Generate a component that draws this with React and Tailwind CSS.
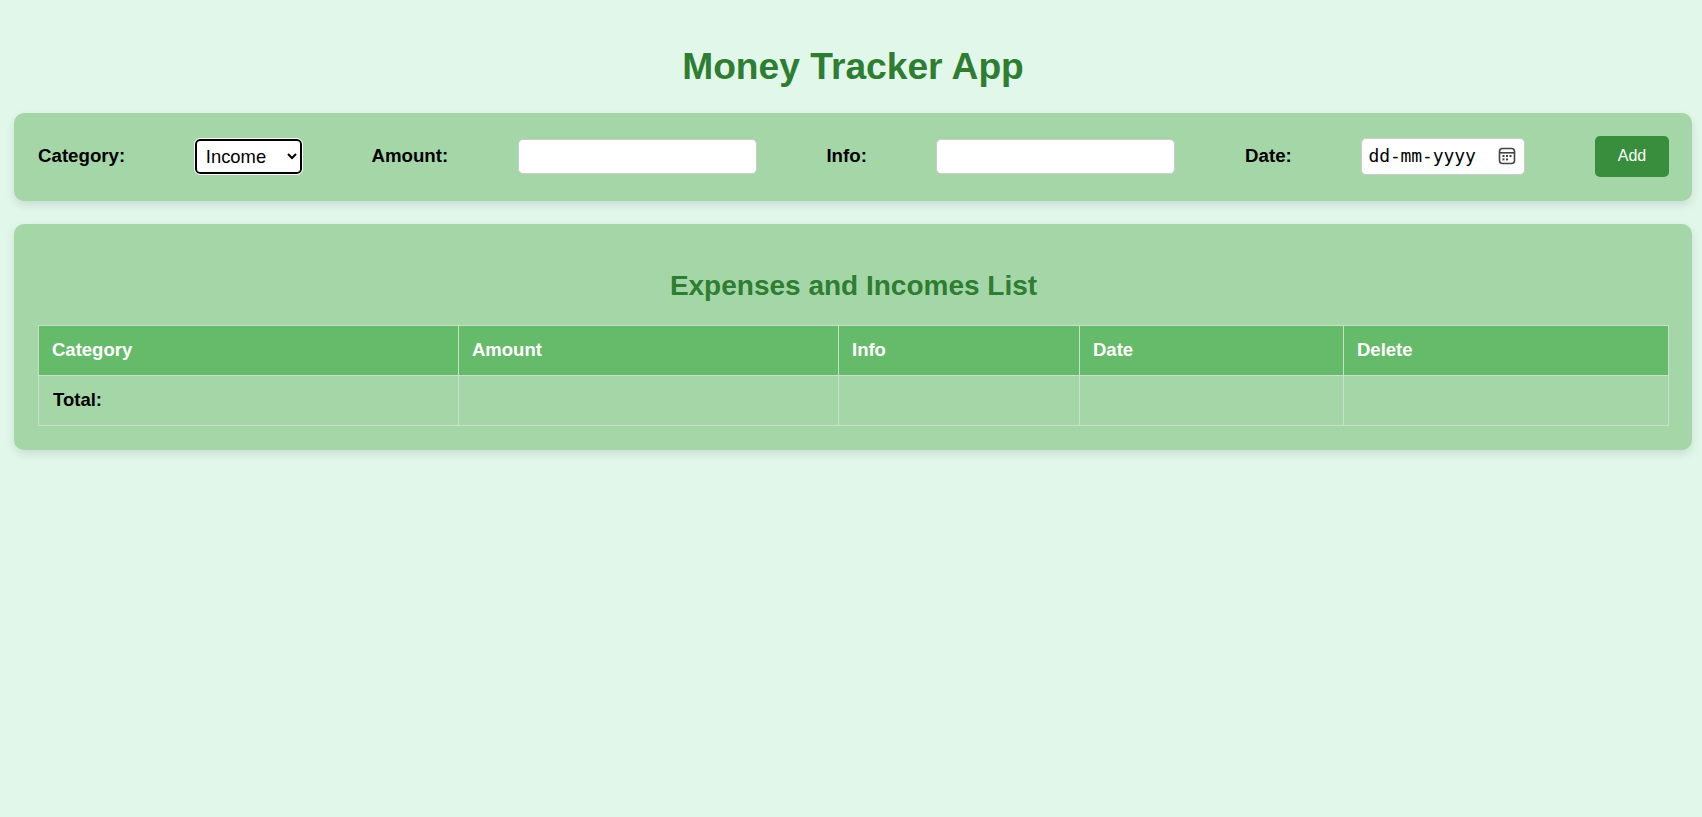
export default function App() {
  const thCls = "border border-[#c8e0c9] px-[13px] pb-[2px] h-[50px] text-left font-bold text-white text-[18.5px] leading-[21px]";
  const tdCls = "border border-[#c8e0c9] px-[14px] pb-[2px] h-[50px]";
  const labelCls = "text-[18.7px] font-bold -translate-y-[1px]";
  return (
    <div className="min-h-[817px] bg-[#e0f7ea] font-['Liberation_Sans',Arial,sans-serif] text-black pl-[14px] pr-[10px] pt-[44px]">
      <h1 className="m-0 text-center text-[37.2px] leading-[44px] font-bold text-[#2e7d32] mb-[25px]">Money Tracker App</h1>
      <form className="flex items-center justify-between h-[88px] pl-[24px] pr-[23px] rounded-[10px] bg-[#a5d6a7] shadow-[0_4px_10px_rgba(0,0,0,0.1)] mb-[23px]">
        <label className={labelCls}>Category:</label>
        <select defaultValue="Income" className="w-[107px] h-[35px] -translate-y-[1px] pl-[5px] text-[18.4px] bg-white text-black rounded-[5px] border-[2px] border-black outline outline-1 outline-white">
          <option>Income</option>
          <option>Expense</option>
        </select>
        <label className={labelCls}>Amount:</label>
        <input type="number" className="w-[239px] h-[35px] -translate-y-[1px] bg-white rounded-[5px] border border-[#ccc] px-[8px] text-[16px]" />
        <label className={labelCls}>Info:</label>
        <input type="text" className="w-[239px] h-[35px] -translate-y-[1px] bg-white rounded-[5px] border border-[#ccc] px-[8px] text-[16px]" />
        <label className={labelCls}>Date:</label>
        <div className="w-[164px] h-[37px] -translate-y-[1px] bg-white rounded-[5px] border border-[#ccc] pl-[6px] pr-[8px] flex items-center justify-between">
          <span className="font-['DejaVu_Sans_Mono',monospace] text-[18px] leading-[22px] tracking-[-0.1px]">dd-mm-yyyy</span>
          <svg width="18" height="18" viewBox="0 0 18 18" fill="none" stroke="#444" strokeWidth="1.6">
            <rect x="1.5" y="1.5" width="15" height="15" rx="3" />
            <path d="M2 5.8h14" />
            <g fill="#444" stroke="none">
              <rect x="4.5" y="8" width="2" height="2" />
              <rect x="8" y="8" width="2" height="2" />
              <rect x="11.5" y="8" width="2" height="2" />
              <rect x="4.5" y="11.4" width="2" height="2" />
              <rect x="8" y="11.4" width="2" height="2" />
            </g>
          </svg>
        </div>
        <button type="button" className="w-[74px] h-[41px] -translate-y-[1px] bg-[#388e3c] text-white rounded-[5px] text-[16px]">Add</button>
      </form>
      <section className="rounded-[10px] bg-[#a5d6a7] shadow-[0_4px_10px_rgba(0,0,0,0.1)] pl-[24px] pr-[23px] pt-[45px] pb-[24px] h-[226px]">
        <h2 className="m-0 text-center text-[28px] leading-[33px] font-bold text-[#2e7d32] mb-[23px]">Expenses and Incomes List</h2>
        <table className="w-full border-collapse table-fixed">
          <colgroup>
            <col className="w-[420px]" />
            <col className="w-[380px]" />
            <col className="w-[241px]" />
            <col className="w-[264px]" />
            <col />
          </colgroup>
          <thead>
            <tr className="bg-[#66bb6a]">
              <th className={thCls}>Category</th>
              <th className={thCls}>Amount</th>
              <th className={thCls}>Info</th>
              <th className={thCls}>Date</th>
              <th className={thCls}>Delete</th>
            </tr>
          </thead>
          <tbody>
            <tr>
              <td className={tdCls + " text-[18.5px] font-bold leading-[21px]"}>Total:</td>
              <td className={tdCls}></td>
              <td className={tdCls}></td>
              <td className={tdCls}></td>
              <td className={tdCls}></td>
            </tr>
          </tbody>
        </table>
      </section>
    </div>
  );
}
